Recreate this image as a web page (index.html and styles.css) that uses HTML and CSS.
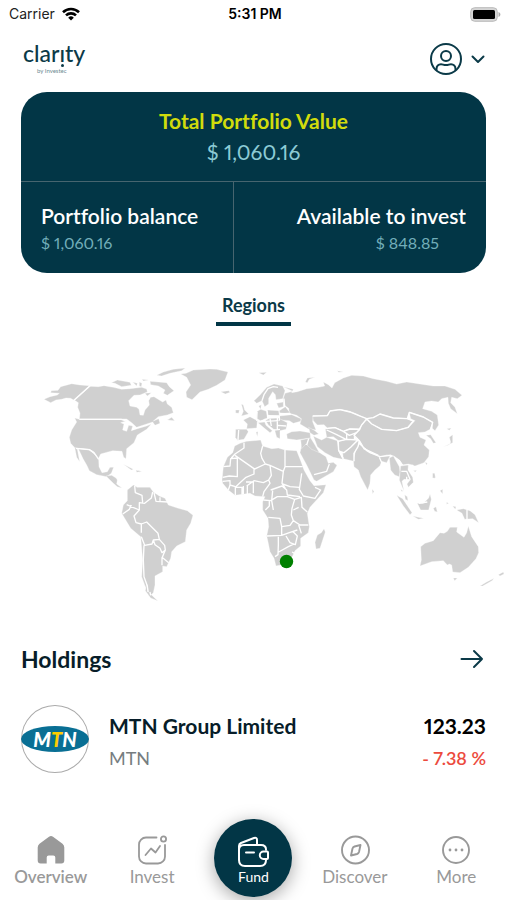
FILE: index.html
```html
<!DOCTYPE html>
<html lang="en">
<head>
<meta charset="utf-8">
<meta name="viewport" content="width=device-width, initial-scale=1">
<title>Clarity – Overview</title>
<link rel="stylesheet" href="styles.css">
</head>
<body>
<div class="app">
  <div class="status">
    <span class="carrier">Carrier
      <svg width="18" height="14" viewBox="0 0 18 14" fill="none" stroke="#000" stroke-width="2.6"><path d="M1 5.2a11.500 11.500 0 0 1 16 0M4 8.400a7.200 7.200 0 0 1 10 0"/><path d="M9 13.600 6.200 10.700a4 4 0 0 1 5.600 0z" fill="#000" stroke="none"/></svg>
    </span>
    <span class="clock">5:31 PM</span>
    <svg class="battery" width="31" height="15" viewBox="0 0 31 15"><rect x=".7" y=".7" width="26.600" height="13.600" rx="4" fill="#d5d5d5" stroke="#bbb"/><rect x="3" y="3" width="22" height="9" rx="1.500" fill="#000"/><path d="M28.500 5c2.500.8 2.500 4.200 0 5z" fill="#aaa"/></svg>
  </div>

  <header class="header">
    <div class="brand"><span class="brand-name">clar<span class="brand-i">ı</span>ty</span><small>by Investec</small></div>
    <button class="account" aria-label="Account">
      <svg width="34" height="34" viewBox="0 0 34 34" fill="none" stroke="#0b3a48" stroke-width="2"><circle cx="17" cy="17" r="15"/><circle cx="17" cy="14" r="5"/><path d="M7.500 28.500v-1.500c0-3 2-4.800 4.500-4.800 1.800 0 2.500.9 5 .9s3.200-.9 5-.9c2.500 0 4.500 1.800 4.500 4.800v1.500"/></svg>
      <svg width="14" height="9" viewBox="0 0 14 9" fill="none" stroke="#0b3a48" stroke-width="2" stroke-linecap="round" stroke-linejoin="round"><path d="m1.500 1.500 5.500 5.500 5.500-5.500"/></svg>
    </button>
  </header>

  <main class="main">
    <section class="card">
      <div class="total"><h1>Total Portfolio Value</h1><p>$ 1,060.16</p></div>
      <div class="split">
        <div class="cell"><h2>Portfolio balance</h2><p>$ 1,060.16</p></div>
        <div class="cell cell-right"><h2>Available to invest</h2><p>$ 848.85</p></div>
      </div>
    </section>

    <div class="tabs"><button class="tab">Regions</button></div>
  </main>

  <svg class="map" viewBox="0 350 507 265" role="img" aria-label="World map of holdings">
    <g class="land">
      <g transform="translate(30 350) scale(.33333)">
        <path d="M42 148 60 140 82 135 88 130 62 128 64 122 84 121 92 110 125 101 150 105 178 107 132 151 122 145 108 144 95 148 78 150 62 158Z"/>
        <path d="M180 109 205 110 222 107 250 112 275 118 300 116 335 112 350 117 352 126 330 135 312 136 296 152 300 168 320 172 327 178 330 195 340 196 345 180 358 165 356 152 362 142 372 140 388 150 398 156 408 150 412 162 425 172 430 188 412 195 385 200 370 213 386 206 390 220 375 226 368 216 350 222 320 232 305 218 290 207 148 207 150 190 143 172 145 158 134 151Z"/>
        <path d="M148 208H272L290 212 272 218 282 222 278 240 290 244 296 226 308 228 304 242 322 236 350 228 364 222 350 238 322 255 312 278 290 296 288 326 281 322 276 304 248 302 212 312 205 326 190 305 178 298 135 294 122 280 118 262 125 240 140 216 134 204Z"/>
        <path d="M145 296 178 300 195 314 206 326 207 350 216 368 232 365 240 352 251 352 244 370 230 380 200 374 178 362 170 345 160 328Z"/>
        <path d="M134 292 142 298 149 335 140 322ZM228 378 245 376 258 384 262 390 260 402 276 414 262 410 250 400 240 390ZM280 343 310 358 304 360ZM322 361 335 364 328 367ZM412 210 425 202 434 212Z"/>
        <path d="M244 98 262 90 300 97 304 106 275 110 255 100ZM308 96 322 100 320 108ZM328 96 336 100 334 110 328 108ZM360 94 385 96 410 98 418 110 432 122 412 136 400 130 405 120 385 108 362 104ZM345 130 364 128 352 138ZM336 88 356 90 340 93ZM380 76 400 66 430 58 466 54 455 62 420 70 395 78Z"/>
        <path class="border" d="M148 208H274L292 214M182 106 130 152M138 295 178 299 192 308 206 328"/>
      </g>
      <g transform="translate(200 350) scale(.33333)">
        <path d="M-58 72-42 70-20 60 30 57 50 58 84 66 75 90 50 106 25 118 0 126-24 149-40 142-42 126-28 105-40 82Z"/>
        <path d="M62 125 86 122 90 127 76 132ZM176 68 200 67 190 75ZM316 96 322 84 345 82 328 88 322 98ZM412 62 430 66 416 67ZM124 162 130 165 134 180 146 192 124 198 130 184ZM107 180 118 180 116 190 107 189Z"/>
        <path d="M162 152 180 135 200 112 222 102 248 108 255 122 248 146 228 149 226 134 218 125 206 145 206 162 194 170 186 152 170 160Z"/><path class="border" d="M186 152 192 134 204 116 220 110 234 112"/>
        <path d="M250 110 280 118 275 128 292 125 320 116 355 112 374 108 370 96 385 104 396 114 404 98 430 84 455 76 490 78 520 86 560 94 590 102 620 96 660 102 700 108 735 108 765 118 786 136 772 146 755 142 752 158 765 172 772 191 752 176 745 160 744 142 725 146 715 156 695 153 675 156 668 176 695 184 712 195 716 225 705 242 697 235 698 216 670 200 628 186 622 206 580 204 540 192 520 206 495 206 470 192 450 184 420 178 390 182 382 196 340 198 338 215 348 240 325 237 300 222 304 206 290 196 268 190 266 175 252 165 250 145 255 130 278 124Z"/>
        <path d="M338 198 382 198 390 183 420 179 450 186 475 196 500 206 485 225 478 236 448 236 430 243 405 232 382 234 372 224 352 225 340 212Z"/>
        <path d="M376 236 405 233 430 244 450 237 478 238 462 256 462 268 440 268 418 274 400 260 380 262Z"/><path class="border" d="M380 240 410 254 438 268M430 244 448 256 470 248M440 250V268"/>
        <path d="M500 207 515 222 545 238 590 242 625 232 645 212 632 206 628 188 670 202 698 218 690 238 675 246 655 248 660 262 678 270 672 285 688 300 686 320 672 338 645 348 625 342 608 345 598 330 582 318 560 315 540 322 510 308 490 292 478 272 462 258 480 240 485 225Z"/>
        <path d="M502 206 520 202 540 192 580 204 620 206 638 214 622 232 590 241 545 237 515 221Z"/>
        <path d="M470 278 482 286 500 304 540 320 572 314 560 338 545 334 540 347 525 360 512 375 510 400 503 420 495 405 482 380 475 360 462 350 460 330 465 310Z"/><path class="border" d="M490 295 535 316M538 322 546 340"/>
        <path d="M458 268 476 274 474 290 462 310 462 334 430 326 428 310 450 295Z"/><path d="M415 275 440 268 472 268 452 292 430 308 415 300Z"/><path d="M340 258 350 263 365 270 380 262 412 272 415 300 428 328 400 322 375 308 352 290Z"/>
        <path d="M260 252 275 245 300 243 330 248 332 264 290 270 262 266Z"/><path d="M305 285 320 283 350 302 378 320 385 340 400 337 411 346 400 365 350 394 342 390 320 345 300 308Z"/><path class="border" d="M342 374 380 364 388 342"/>
        <path d="M302 270 332 264 345 285 358 308 335 298 318 282 305 296Z"/><path class="border" d="M326 266 320 285"/><path d="M326 232 345 242 356 252 342 256 330 248Z"/>
        <path class="border" d="M338 198 382 197 390 183 420 179 450 186 475 196 500 206 520 203 540 192 580 204 622 206 628 187 670 201 698 217 692 238M500 207 515 222 545 238 590 242 625 232 640 213 622 206M500 207 485 225 478 238 462 256 478 272 490 292 510 308 540 320 572 316 598 332 608 346 640 346M376 236 405 233 430 244 450 237 478 238M412 274 440 268 476 270M415 275 416 302 430 326M416 304 432 308 452 292 474 270M462 334 462 310 474 290 478 276"/>
        <path d="M568 324 580 318 598 350 600 366 598 380 584 375 572 360Z"/><path d="M602 348 625 345 624 360 638 382 640 397 625 412 621 402 632 388 612 388 606 394 612 424 598 390 600 370Z"/><path class="border" d="M604 364 620 364 630 388M620 380V392"/>
        <path d="M678 256 692 254 697 262 708 278 700 280 692 266ZM730 290 748 284 752 276 748 262 758 254 758 278ZM740 236 754 234 748 241ZM700 370 706 378 702 386ZM676 337 682 340 679 346ZM640 362 650 361 646 366Z"/>
        <path d="M107 238 140 238 145 245 132 268 112 271 106 262Z"/><path class="border" d="M116 240 114 270"/><path d="M130 210 150 200 172 212 170 234 140 236 142 222Z"/><path d="M172 184 182 178 200 184 202 205 182 212 168 205Z"/><path d="M202 180 236 182 238 198 204 196Z"/><path d="M238 198 275 194 303 206 302 214 280 220 268 212 238 210Z"/><path d="M238 182 256 170 270 188 240 192ZM230 160 250 156 250 170 236 174ZM176 168 184 164 182 178Z"/><path d="M174 218 194 216 198 226 217 242 210 248 190 232ZM168 246 174 245 172 260Z"/><path d="M194 206 235 204 262 218 258 238 240 242 240 266 230 262 224 240 205 225Z"/><path class="border" d="M196 214 235 212M210 206 214 228M232 204V240M234 226 258 228M222 240 240 238M171 186 170 212M201 182 204 206 182 214M204 197 238 198 238 212M240 190 272 192M252 146 254 170"/>
      </g>
      <g transform="translate(200 430) scale(.33333)">
        <path d="M104 48 120 40 140 34 182 30 188 48 215 56 235 54 255 60 290 62 302 92 312 120 330 152 342 167 378 164 370 188 345 215 330 232 322 250 328 290 325 308 302 325 302 348 285 362 278 378 258 402 228 408 222 385 210 365 204 335 200 318 206 290 204 265 188 240 188 215 195 200 165 198 150 190 105 196 85 180 68 160 66 150 70 110 82 82 98 68Z"/>
        <path d="M372 296 376 306 360 355 348 357 345 337 352 315 364 308Z"/>
        <path class="border" d="M132 38V54L105 72 94 84M70 110 90 108 92 86 112 84V140L88 138 68 142M105 76 162 116V132L138 142 120 158M188 48 182 70 186 85 196 102 162 118M196 102 210 106 250 124 255 110V60M255 110H308M250 124 246 160 256 175M210 106 214 136 206 150 190 158 162 152 140 168M206 150 210 160 192 185 188 200M212 180 246 168 260 180 262 195 300 200M305 130 300 165 298 178 310 198 345 205 362 180 345 172M248 162 270 170 298 172M190 210 212 212 232 200 262 200 284 208 276 235 274 255 280 272 270 286 245 290 240 265 205 262M208 212 208 228 196 240M218 182 215 212 220 240M284 208 304 202 306 232 322 246M280 240 296 232M280 272 300 285 325 285M200 318 245 316V290M245 316 268 308 292 300M235 320V345L234 374 225 380M236 366 265 350 282 342M258 318 270 338 286 344 292 318 280 306M296 285 304 310M68 154 90 152 90 165 106 170V196M106 172 126 172V194M130 168V192M142 166V192M90 165 85 180M120 158 106 172M138 156 160 156V190M276 366 284 370"/>
      </g>
      <g transform="translate(100 470) scale(.33333)">
        <path d="M82 60 100 45 112 52 150 52 160 66 178 78 195 85 205 105 235 115 262 122 279 136 272 160 260 180 256 215 230 228 215 245 212 265 200 290 188 288 188 305 165 318 165 345 160 368 152 376 136 350 125 320 128 270 122 200 92 175 65 130 70 105 82 92Z"/>
        <path d="M140 342 146 366 160 380 174 393 152 384 136 362ZM108 0 122 5 110 7Z"/>
        <path class="border" d="M104 48 106 68 126 76 128 98M158 66 154 84 134 100 118 98 118 120 80 104M68 132 88 118 94 105M162 68 168 94 206 96M180 82V94M118 120 102 138 108 158 124 162 124 188M124 162 140 156 174 190 178 208 160 210 156 222 134 226 124 200M160 210 165 224 180 235 186 248 196 240 194 226 178 208M186 262 206 278M186 262 186 286M196 240 186 264M132 226 130 270 132 320 142 348 144 366M152 376 150 366"/>
      </g>
      <g transform="translate(360 450) scale(.33333)">
        <path d="M182 290 195 280 220 272 240 248 252 250 262 244 270 232 292 232 290 246 312 262 320 248 325 228 335 260 355 290 356 308 348 326 325 352 300 368 278 366 275 345 268 342 262 345 250 332 215 335 180 348 184 330Z"/>
        <path d="M280 384 292 384 284 392ZM360 408 380 396 402 385 396 392 368 408ZM415 374 430 366 432 372 420 378Z"/>
        <path d="M110 136 128 146 156 188 150 194 130 168ZM134 134 142 140 144 152 136 148ZM158 198 175 202 192 205 175 208ZM172 160 190 160 206 144 210 132 214 148 206 180 182 180ZM220 175 228 170 232 186 224 184ZM240 122 248 118 248 132ZM218 70 224 70 226 84 218 84ZM278 168 288 170 286 178ZM290 180 310 176 330 182 345 194 356 218 338 206 314 208 306 190ZM36 118 42 124 38 132ZM260 157 266 160 260 163ZM122 118 130 124 124 124Z"/>
        <path class="border" d="M321 178V210M176 160 202 156"/>
      </g>
    </g>
    <circle class="pin" cx="286.500" cy="561.500" r="6.700"/>
  </svg>

  <section class="holdings">
    <div class="holdings-head"><h2>Holdings</h2>
      <a href="#holdings" aria-label="All holdings"><svg width="24" height="20" viewBox="0 0 24 20" fill="none" stroke="#0b3a48" stroke-width="2" stroke-linecap="round" stroke-linejoin="round"><path d="M1.500 10h20.500M14 2l8 8-8 8"/></svg></a>
    </div>
    <a class="holding" href="#mtn">
      <span class="logo"><span class="logo-mark">M<b>T</b>N</span></span>
      <span class="names"><strong>MTN Group Limited</strong><span>MTN</span></span>
      <span class="figures"><strong>123.23</strong><span>- 7.38 %</span></span>
    </a>
  </section>

  <nav class="nav">
    <a href="#overview" class="current"><svg width="30" height="30" viewBox="0 0 30 30"><path d="M13 1.800q2-1.400 4 0l9.500 7q1.800 1.400 1.800 3.700v13q0 3-3 3h-6v-6q0-2-2-2h-4.600q-2 0-2 2v6h-6q-3 0-3-3v-13q0-2.300 1.800-3.700z" fill="#999"/></svg>Overview</a>
    <a href="#invest"><svg width="30" height="30" viewBox="0 0 30 30" fill="none" stroke="#999" stroke-width="1.800" stroke-linecap="round" stroke-linejoin="round"><path d="M19.500 2.500H9a7 7 0 0 0-7 7v12a7 7 0 0 0 7 7h12a7 7 0 0 0 7-7V10"/><circle cx="26.500" cy="4" r="2.600"/><path d="m8.500 20 5.500-6.500 4.500 4 4.500-6.500"/></svg>Invest</a>
    <a href="#fund" class="fund"><svg width="34" height="34" viewBox="0 0 34 34" fill="none" stroke="#fff" stroke-width="2" stroke-linecap="round" stroke-linejoin="round"><path d="M30 14.500c0-3-2-4.500-5-4.500H8c-3 0-5 2-5 5v10c0 4 2 6 6 6h15c4 0 6-2 6-6v-1M3 15V11q0-2 2-3l13-5q3-1 3 2v5M10 17.500h8M31 16.500h-3.500a3.700 3.700 0 0 0 0 7.400H31q1 0 1-1v-5.400q0-1-1-1z"/></svg>Fund</a>
    <a href="#discover"><svg width="30" height="30" viewBox="0 0 30 30" fill="none" stroke="#999" stroke-width="1.900" stroke-linejoin="round"><circle cx="15.500" cy="15" r="13.500"/><path d="m20.500 10-1.500 7q-.5 1.500-2 2l-6 1.500 1.500-7q.5-1.500 2-2z"/></svg>Discover</a>
    <a href="#more"><svg width="30" height="30" viewBox="0 0 30 30" fill="none" stroke="#999" stroke-width="1.900"><circle cx="15" cy="15" r="13"/><g fill="#999" stroke="none"><circle cx="9" cy="15" r="1.400"/><circle cx="15" cy="15" r="1.400"/><circle cx="21" cy="15" r="1.400"/></g></svg>More</a>
  </nav>
</div>
</body>
</html>
```
FILE: styles.css
```css
* { box-sizing: border-box; }
body { margin: 0; background: #fff; color: #071d29; font-family: Lato, "Open Sans", sans-serif; font-variant-ligatures: none; font-variant-numeric: proportional-nums; }
h1, h2, p { margin: 0; }
a { color: inherit; text-decoration: none; }
svg { display: block; flex: none; }
button { border: 0; padding: 0; background: none; color: inherit; font: inherit; cursor: pointer; }
.app { min-height: 100vh; display: flex; flex-direction: column; overflow: hidden; }

.status { display: grid; grid-template-columns: 1fr auto 1fr; align-items: center; height: 28px; padding: 0 6px 0 9px; font: 14px/20px Inter, sans-serif; color: #222; }
.carrier { display: flex; align-items: center; gap: 7px; }
.clock { font-weight: 600; color: #000; }
.battery { justify-self: end; }

.header { display: flex; justify-content: space-between; align-items: center; height: 62px; margin-bottom: 2px; padding: 0 22px 0 23px; }
.brand { display: flex; flex-direction: column; color: #0b3a48; }
.brand-name { font-size: 23px; line-height: 22px; font-weight: 500; }
.brand-i { position: relative; }
.brand-i::after { content: ""; position: absolute; left: 2px; bottom: 0; width: 3px; height: 3px; border-radius: 50%; background: #0b3a48; }
.brand small { padding: 4px 0 2px 14px; font-size: 6px; line-height: 6px; color: #6d8991; }
.account { display: flex; align-items: center; gap: 8px; }

.main { padding: 0 21px; }
.card { border-radius: 26px; background: #023646; overflow: hidden; text-align: center; }
.total { height: 90px; padding-top: 14px; border-bottom: 1px solid #47656f; }
.total h1 { font-size: 21px; line-height: 30px; font-weight: 700; color: #d1dc0c; }
.total p { font-size: 21px; line-height: 32px; color: #8ccbd5; }
.split { display: grid; grid-template-columns: 212px 1fr; height: 91px; }
.cell { padding: 20px; text-align: left; }
.cell + .cell { border-left: 1px solid #47656f; }
.cell h2 { font-size: 21px; line-height: 28px; font-weight: 600; color: #fff; white-space: nowrap; }
.cell p { font-size: 16px; line-height: 26px; color: #72aeb9; }
.cell-right { text-align: right; }
.cell-right p { padding-right: 27px; }
.tabs { display: flex; justify-content: center; padding-top: 18px; }
.tab { padding: 0 6px 2px; border-bottom: 4px solid #023646; font-size: 18px; line-height: 29px; font-weight: 700; color: #0b3a48; }

.map { width: 100%; margin-top: 24px; }
.land { fill: #d0d0d0; stroke: #fff; stroke-width: 1; stroke-linejoin: round; }
.border { fill: none; stroke-width: 4; }
.pin { fill: #008000; }

.holdings { padding: 26px 21px 0; }
.holdings-head { display: flex; justify-content: space-between; align-items: center; padding-right: 2px; }
.holdings-head h2 { font-size: 23px; line-height: 36px; font-weight: 700; }
.holding { display: flex; align-items: center; margin-top: 26px; }
.logo { display: flex; align-items: center; width: 68px; height: 68px; border-radius: 50%; overflow: hidden; box-shadow: inset 0 0 0 1px #aaa; }
.logo-mark { width: 100%; height: 26px; border-radius: 50%; background: #096f94; color: #fff; text-align: center; font: italic 900 20px/26px Lato, sans-serif; }
.logo-mark b { color: #fc0; }
.names, .figures { display: flex; flex-direction: column; padding-top: 7px; line-height: 32px; }
.names { flex: 1; padding-left: 20px; }
.names strong, .figures strong { font-size: 21px; font-weight: 700; }
.names span { font-size: 18px; color: #767d80; }
.figures { text-align: right; }
.figures strong { color: #000; }
.figures span { font-size: 18px; font-weight: 600; color: #ec4a3d; }

.nav { display: grid; grid-template-columns: repeat(5, 1fr); align-items: center; justify-items: center; height: 84px; margin-top: auto; color: #999; font-size: 17px; line-height: 24px; }
.nav a { display: flex; flex-direction: column; align-items: center; padding-top: 7px; }
.nav .current { font-weight: 600; }
.nav .fund { justify-content: center; width: 78px; height: 78px; padding-top: 4px; border-radius: 50%; background: #023646; color: #fff; font-size: 14px; line-height: 16px; box-shadow: 0 4px 18px rgba(0, 0, 0, .35); }
```
